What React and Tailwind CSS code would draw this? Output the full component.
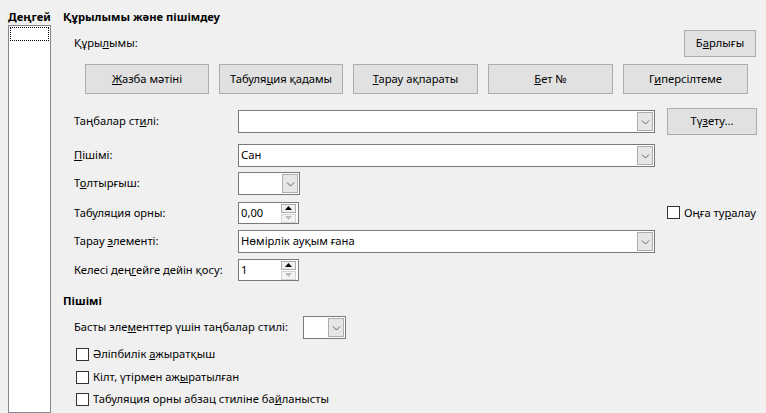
import React from 'react';

const font = { fontFamily: '"Noto Sans", "Open Sans", sans-serif' };

function Btn({ children, className = '' }) {
  return (
    <div className={`flex items-center justify-center border border-[#adadad] bg-[#e1e1e1] text-[11.2px] text-black ${className}`}>
      {children}
    </div>
  );
}

function Chevron() {
  return (
    <svg width="9" height="6" viewBox="0 0 9 6" fill="none">
      <path d="M1 1.5l3.5 3.5 3.5-3.5" stroke="#606060" strokeWidth="1" />
    </svg>
  );
}

function Combo({ value = '', className = '' }) {
  return (
    <div className={`flex h-[23px] border border-[#7a7a7a] bg-white ${className}`}>
      <div className="flex flex-1 items-center pl-[2px] text-[11.2px] text-black">{value}</div>
      <div className="m-[1px] flex w-[16px] items-center justify-center border border-[#adadad] bg-[#e6e6e6]">
        <Chevron />
      </div>
    </div>
  );
}

function Spin({ value }) {
  return (
    <div className="flex h-[22px] w-[61px] border border-[#7a7a7a] bg-white">
      <div className="flex flex-1 items-center pl-[2px] text-[11.2px] text-black">{value}</div>
      <div className="mr-[2px] flex w-[15px] flex-col justify-center gap-[1px]">
        <div className="flex h-[9px] items-center justify-center border border-[#adadad] bg-[#f0f0f0]">
          <svg width="7" height="4" viewBox="0 0 7 4"><path d="M0 4L3.5 0 7 4z" fill="#000" /></svg>
        </div>
        <div className="flex h-[9px] items-center justify-center border border-[#d4d4d4] bg-[#f4f4f4]">
          <svg width="7" height="4" viewBox="0 0 7 4"><path d="M0 0h7L3.5 4z" fill="#bcbcbc" /></svg>
        </div>
      </div>
    </div>
  );
}

function Check({ children, className = '' }) {
  return (
    <div className={`flex items-center gap-[4px] text-[11.2px] text-black ${className}`}>
      <div className="h-[13px] w-[13px] border border-[#333] bg-white" />
      <span>{children}</span>
    </div>
  );
}

function Row({ label, children, className = '' }) {
  return (
    <div className={`flex items-center ${className}`}>
      <div className="w-[175px] whitespace-nowrap pl-[11px] text-[11.2px] text-black">{label}</div>
      {children}
    </div>
  );
}

export default function App() {
  return (
    <div className="flex h-[413px] w-[766px] overflow-hidden bg-[#f0f0f0]" style={font}>
      {/* Level list */}
      <div className="flex w-[63px] shrink-0 flex-col pl-[8px] pt-[9px]">
        <div className="text-[11.2px] font-bold leading-[15px] text-black"><u>Д</u>еңгей</div>
        <div className="mt-[1px] h-[400px] w-[43px] border border-[#828790] bg-white p-[1px]">
          <div className="h-[14px] border border-dotted border-black" />
        </div>
      </div>

      {/* Main panel */}
      <div className="flex flex-1 flex-col">
        <div className="pt-[9px] text-[11.2px] font-bold leading-[16px] text-black">Құрылымы және пішімдеу</div>

        <div className="mt-[5px] flex h-[27px] items-center justify-between pr-[10px]">
          <div className="pl-[11px] text-[11.2px] text-black">Құры<u>л</u>ымы:</div>
          <Btn className="h-[27px] w-[72px]"><span>Б<u>а</u>рлығы</span></Btn>
        </div>

        <div className="mt-[7px] flex gap-[10px] pl-[22px]">
          <Btn className="h-[30px] w-[124px]"><span><u>Ж</u>азба мәтіні</span></Btn>
          <Btn className="h-[30px] w-[124px]"><span>Табуля<u>ц</u>ия қадамы</span></Btn>
          <Btn className="h-[30px] w-[125px]"><span><u>Т</u>арау ақпараты</span></Btn>
          <Btn className="h-[30px] w-[125px]"><span><u>Б</u>ет №</span></Btn>
          <Btn className="h-[30px] w-[125px]"><span>Г<u>и</u>персілтеме</span></Btn>
        </div>

        <Row label={<span>Таңбалар ст<u>и</u>лі:</span>} className="mt-[14px] h-[27px]">
          <Combo className="w-[417px]" />
          <Btn className="ml-[12px] h-[27px] w-[90px]"><span>Тү<u>з</u>ету...</span></Btn>
        </Row>

        <Row label={<span><u>П</u>ішімі:</span>} className="mt-[9px] h-[23px]">
          <Combo value="Сан" className="w-[417px]" />
        </Row>

        <Row label={<span>Т<u>о</u>лтырғыш:</span>} className="mt-[5px] h-[23px]">
          <Combo className="w-[62px]" />
        </Row>

        <Row label="Табуляция орны:" className="mt-[7px] h-[22px]">
          <Spin value="0,00" />
          <Check className="ml-[368px]">Оңға ту<u>р</u>алау</Check>
        </Row>

        <Row label={<span>Тарау <u>э</u>лементі:</span>} className="mt-[6px] h-[23px]">
          <Combo value="Нөмірлік ауқым ғана" className="w-[417px]" />
        </Row>

        <Row label={<span>Келесі дең<u>г</u>ейге дейін қосу:</span>} className="mt-[6px] h-[22px]">
          <Spin value="1" />
        </Row>

        <div className="mt-[12px] text-[11.2px] font-bold leading-[16px] text-black">Пішімі</div>

        <div className="mt-[7px] flex h-[23px] items-center">
          <div className="w-[240px] whitespace-nowrap pl-[11px] text-[11.2px] text-black">Басты эле<u>м</u>енттер үшін таңбалар стилі:</div>
          <Combo className="w-[43px]" />
        </div>

        <div className="mt-[4px] flex flex-col pl-[13px]">
          <Check className="h-[23px]">Әліпбилік <u>а</u>жыратқыш</Check>
          <Check className="h-[22px]">Кілт, үтірмен аж<u>ы</u>ратылған</Check>
          <Check className="h-[22px]">Табуляция орны абзац стиліне ба<u>й</u>ланысты</Check>
        </div>
      </div>
    </div>
  );
}
